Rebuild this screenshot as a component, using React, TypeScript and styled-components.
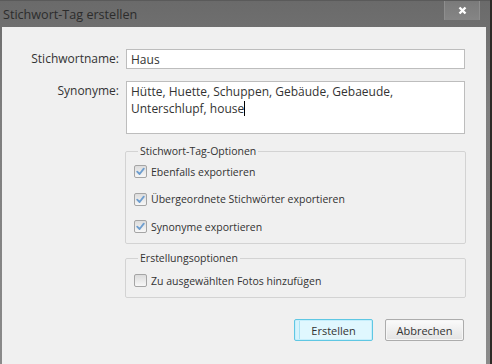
import React, { FC } from "react";
import styled, { createGlobalStyle } from "styled-components";

const GlobalStyle = createGlobalStyle`
  html, body {
    margin: 0;
    padding: 0;
    background: #2e2a26;
  }
  body {
    font-family: "Open Sans", "Noto Sans", sans-serif;
    font-size: 12px;
    color: #333;
  }
`;

interface CheckProps {
  label: string;
  checked?: boolean;
}

const Check: FC<CheckProps> = ({ label, checked }) => (
  <CheckRow>
    <Box>
      {checked && (
        <svg width="9" height="9" viewBox="0 0 9 9">
          <path
            d="M1.2 4.6 L3.6 7 L7.8 1.6"
            fill="none"
            stroke="#6e9ecf"
            strokeWidth="1.8"
            strokeLinecap="round"
            strokeLinejoin="round"
          />
        </svg>
      )}
    </Box>
    <span>{label}</span>
  </CheckRow>
);

export default function App() {
  return (
    <>
      <GlobalStyle />
      <Window>
        <TitleBar>
          <Title>Stichwort-Tag erstellen</Title>
          <CloseButton>
            <svg width="9" height="9" viewBox="0 0 9 9">
              <path d="M1.5 1.5 L7.5 7.5 M7.5 1.5 L1.5 7.5" stroke="#fff" strokeWidth="2.4" />
            </svg>
          </CloseButton>
        </TitleBar>
        <Frame>
          <Content>
            <Form>
              <Label>Stichwortname:</Label>
              <TextInput readOnly value="Haus" />
              <Label>Synonyme:</Label>
              <TextArea>
                Hütte, Huette, Schuppen, Gebäude, Gebaeude,
                <br />
                Unterschlupf, house
                <Caret />
              </TextArea>
              <span />
              <Group>
                <Legend>Stichwort-Tag-Optionen</Legend>
                <Check checked label="Ebenfalls exportieren" />
                <Check checked label="Übergeordnete Stichwörter exportieren" />
                <Check checked label="Synonyme exportieren" />
              </Group>
              <span />
              <Group $compact>
                <Legend>Erstellungsoptionen</Legend>
                <Check label="Zu ausgewählten Fotos hinzufügen" />
              </Group>
            </Form>
            <Buttons>
              <Button $primary>Erstellen</Button>
              <Button>Abbrechen</Button>
            </Buttons>
          </Content>
        </Frame>
      </Window>
    </>
  );
}

const Window = styled.div`
  width: 490px;
  height: 364px;
  display: flex;
  flex-direction: column;
  background: linear-gradient(#6a6a6a, #7e7e7e 30%, #8a8a8a);
  overflow: hidden;
`;

const TitleBar = styled.div`
  height: 27px;
  display: flex;
  align-items: flex-start;
  justify-content: space-between;
  border-top: 1px solid #5a5a5a;
  box-sizing: border-box;
`;

const Title = styled.div`
  font-family: "Open Sans", sans-serif;
  font-size: 12.6px;
  color: #2c2c2c;
  padding: 5px 0 0 3px;
`;

const CloseButton = styled.div`
  width: 34px;
  height: 19px;
  margin-right: 10px;
  display: flex;
  align-items: center;
  justify-content: center;
  border-left: 1px solid #8e8e8e;
  border-right: 1px solid #8e8e8e;
  background: linear-gradient(#7a7a7a, #858585);
`;

const Frame = styled.div`
  flex: 1;
  display: flex;
  padding: 0 4px 0 2px;
`;

const Content = styled.div`
  flex: 1;
  background: #f0f0f0;
  padding: 22px 21px 0 0;
  display: flex;
  flex-direction: column;
`;

const Form = styled.div`
  display: grid;
  grid-template-columns: 117px 1fr;
  column-gap: 7px;
  row-gap: 12px;
  align-items: start;
`;

const Label = styled.div`
  text-align: right;
  line-height: 20px;
  color: #333;
`;

const TextInput = styled.input`
  height: 20px;
  box-sizing: border-box;
  border: 1px solid #bdbdbd;
  background: #fff;
  font: inherit;
  font-size: 12px;
  color: #333;
  padding: 0 4px;
  outline: none;
`;

const TextArea = styled.div`
  height: 53px;
  box-sizing: border-box;
  border: 1px solid #bdbdbd;
  background: #fff;
  color: #333;
  padding: 1px 4px;
  line-height: 17px;
`;

const Caret = styled.span`
  display: inline-block;
  width: 1px;
  height: 15px;
  background: #000;
  vertical-align: -3px;
`;

const Group = styled.fieldset<{ $compact?: boolean }>`
  margin: ${(p) => (p.$compact ? "-5px -1px 0" : "-2px -1px 0")};
  padding: ${(p) => (p.$compact ? "7px 8px 8px" : "5px 8px 8px")};
  border: 1px solid #d3d3d3;
  border-radius: 2px;
  display: flex;
  flex-direction: column;
  gap: 10.5px;
  font-size: 10.5px;
`;

const Legend = styled.legend`
  padding: 0 2px;
  margin-left: 4px;
  color: #333;
`;

const CheckRow = styled.div`
  display: flex;
  align-items: center;
  gap: 4px;
  height: 17px;
  color: #333;
`;

const Box = styled.div`
  width: 11px;
  height: 11px;
  border: 1px solid #a5a5a5;
  border-radius: 2px;
  background: linear-gradient(#dcdcdc, #f7f7f7);
  display: flex;
  align-items: center;
  justify-content: center;
`;

const Buttons = styled.div`
  display: flex;
  justify-content: flex-end;
  gap: 12px;
  margin-top: 21px;
  margin-right: 1px;
`;

const Button = styled.div<{ $primary?: boolean }>`
  width: 79px;
  height: 22px;
  box-sizing: border-box;
  display: flex;
  align-items: center;
  justify-content: center;
  border-radius: 2px;
  color: #333;
  font-size: 11px;
  border: 1px solid ${(p) => (p.$primary ? "#5fc7e3" : "#acacac")};
  background: ${(p) =>
    p.$primary
      ? "linear-gradient(90deg, #d6f3fc 0, #d6f3fc 4px, #a8e3f4 4px, #a8e3f4 5px, #e0f7fe 5px)"
      : "linear-gradient(#fbfbfb, #e3e3e3)"};
  box-shadow: inset 0 0 0 1px ${(p) => (p.$primary ? "#c6eefb" : "#f6f6f6")};
`;
